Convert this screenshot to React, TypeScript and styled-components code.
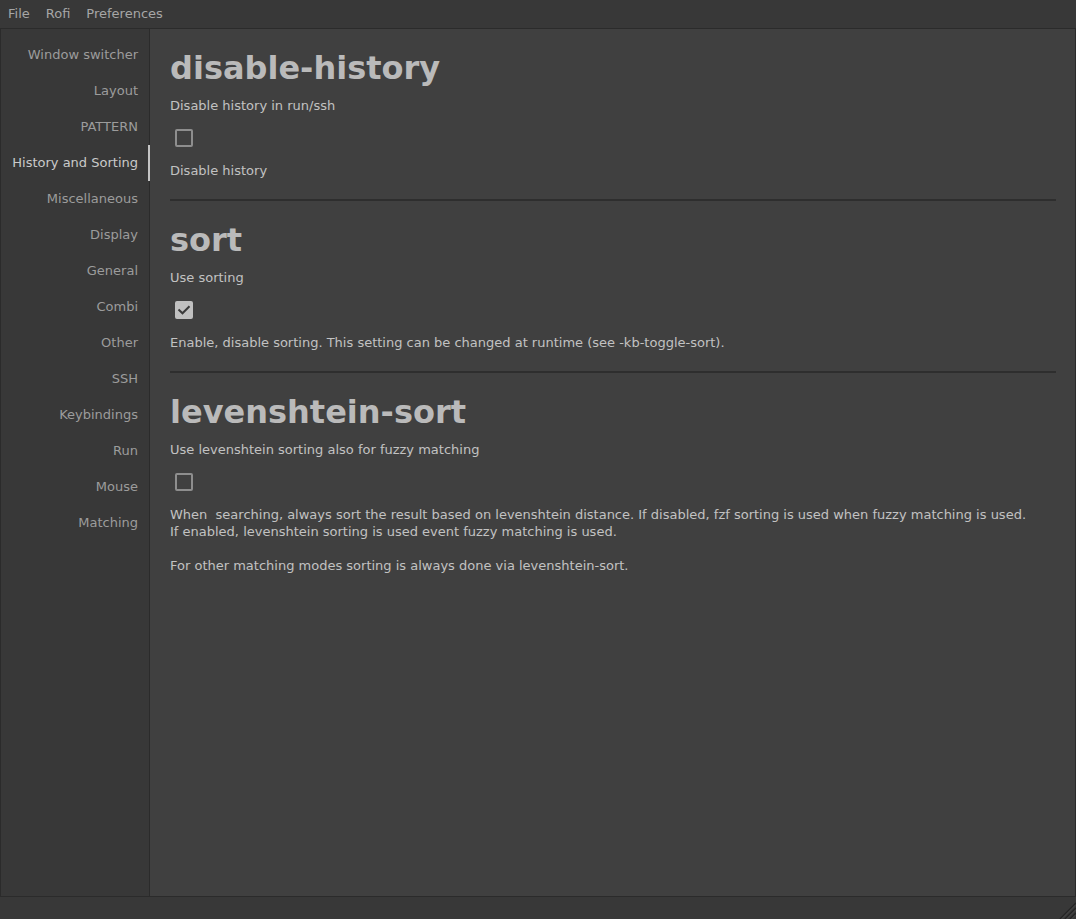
import React from "react";
import styled, { createGlobalStyle } from "styled-components";

const Global = createGlobalStyle`
  html, body { margin: 0; padding: 0; background: #383838; }
  body { font-family: "DejaVu Sans", "Liberation Sans", sans-serif; font-size: 13px; }
  #root { height: 100vh; }
`;

const Window = styled.div`
  height: 919px;
  display: flex;
  flex-direction: column;
  background: #383838;
  color: #c2c2c2;
`;

const MenuBar = styled.div`
  height: 28px;
  border-bottom: 1px solid #2b2b2b;
  display: flex;
  align-items: center;
  padding-left: 8px;
  gap: 16px;
  background: #383838;
`;

const MenuItem = styled.span`
  color: #a6a6a6;
  font-size: 13px;
  line-height: 16px;
`;

const Main = styled.div`
  flex: 1;
  min-height: 0;
  display: flex;
  border-left: 1px solid #2b2b2b;
  border-right: 1px solid #2b2b2b;
  border-bottom: 1px solid #2b2b2b;
`;

const Sidebar = styled.nav`
  width: 148px;
  flex: none;
  border-right: 1px solid #2b2b2b;
  background: #383838;
  padding-top: 7px;
  display: flex;
  flex-direction: column;
`;

const NavItem = styled.div<{ $active?: boolean }>`
  position: relative;
  height: 36px;
  display: flex;
  align-items: center;
  justify-content: flex-end;
  padding-right: 11px;
  color: ${(p) => (p.$active ? "#cacaca" : "#9c9c9c")};
  font-size: 13px;
  white-space: nowrap;
  &::after {
    content: "";
    display: ${(p) => (p.$active ? "block" : "none")};
    position: absolute;
    right: -1px;
    top: 1px;
    width: 2px;
    height: 36px;
    background: #c4c4c4;
  }
`;

const Content = styled.main`
  flex: 1;
  background: #404040;
  padding: 0 19px 0 20px;
  display: flex;
  flex-direction: column;
`;

const Section = styled.section`
  padding-top: 20px;
  display: flex;
  flex-direction: column;
`;

const Title = styled.h1`
  margin: 0;
  font-size: 32px;
  line-height: 38px;
  font-weight: bold;
  color: #bababa;
`;

const Subtitle = styled.div`
  margin-top: 11px;
  line-height: 16px;
  color: #c2c2c2;
`;

const Check = styled.div<{ $checked?: boolean }>`
  margin: 15px 0 0 5px;
  width: 18px;
  height: 18px;
  box-sizing: border-box;
  border-radius: 2px;
  border: 2px solid ${(p) => (p.$checked ? "#c0c0c0" : "#8e8e8e")};
  background: ${(p) => (p.$checked ? "#c0c0c0" : "transparent")};
  display: flex;
  align-items: center;
  justify-content: center;
`;

const Description = styled.div`
  margin-top: 15px;
  line-height: 17px;
  color: #c2c2c2;
  white-space: pre-wrap;
`;

const Separator = styled.hr`
  margin: 20px 0 0 0;
  border: none;
  height: 2px;
  background: #2e2e2e;
`;

const StatusBar = styled.div`
  height: 22px;
  background: #383838;
  display: flex;
  justify-content: flex-end;
  align-items: flex-end;
`;

const navItems = [
  "Window switcher",
  "Layout",
  "PATTERN",
  "History and Sorting",
  "Miscellaneous",
  "Display",
  "General",
  "Combi",
  "Other",
  "SSH",
  "Keybindings",
  "Run",
  "Mouse",
  "Matching",
];

const sections = [
  {
    title: "disable-history",
    sub: "Disable history in run/ssh",
    checked: false,
    desc: "Disable history",
  },
  {
    title: "sort",
    sub: "Use sorting",
    checked: true,
    desc: "Enable, disable sorting. This setting can be changed at runtime (see -kb-toggle-sort).",
  },
  {
    title: "levenshtein-sort",
    sub: "Use levenshtein sorting also for fuzzy matching",
    checked: false,
    desc:
      "When  searching, always sort the result based on levenshtein distance. If disabled, fzf sorting is used when fuzzy matching is used.\nIf enabled, levenshtein sorting is used event fuzzy matching is used.\n\nFor other matching modes sorting is always done via levenshtein-sort.",
  },
];

const CheckMark = () => (
  <svg width="14" height="10" viewBox="0 0 14 10">
    <path d="M1.5 4.5 L5.5 8.3 L12.5 1.2" fill="none" stroke="#3a3a3a" strokeWidth="2" />
  </svg>
);

const Grip = () => (
  <svg width="18" height="18" viewBox="0 0 18 18">
    <path d="M18 2 L2 18 M18 7 L7 18 M18 12 L12 18" stroke="#242424" strokeWidth="1.5" />
    <path d="M18 3.5 L3.5 18 M18 8.5 L8.5 18 M18 13.5 L13.5 18" stroke="#555" strokeWidth="0.7" />
  </svg>
);

export default function App() {
  return (
    <Window>
      <Global />
      <MenuBar>
        <MenuItem>File</MenuItem>
        <MenuItem>Rofi</MenuItem>
        <MenuItem>Preferences</MenuItem>
      </MenuBar>
      <Main>
        <Sidebar>
          {navItems.map((n) => (
            <NavItem key={n} $active={n === "History and Sorting"}>
              {n}
            </NavItem>
          ))}
        </Sidebar>
        <Content>
          {sections.map((s, i) => (
            <Section key={s.title}>
              <Title>{s.title}</Title>
              <Subtitle>{s.sub}</Subtitle>
              <Check $checked={s.checked}>{s.checked && <CheckMark />}</Check>
              <Description>{s.desc}</Description>
              {i < sections.length - 1 && <Separator />}
            </Section>
          ))}
        </Content>
      </Main>
      <StatusBar>
        <Grip />
      </StatusBar>
    </Window>
  );
}
